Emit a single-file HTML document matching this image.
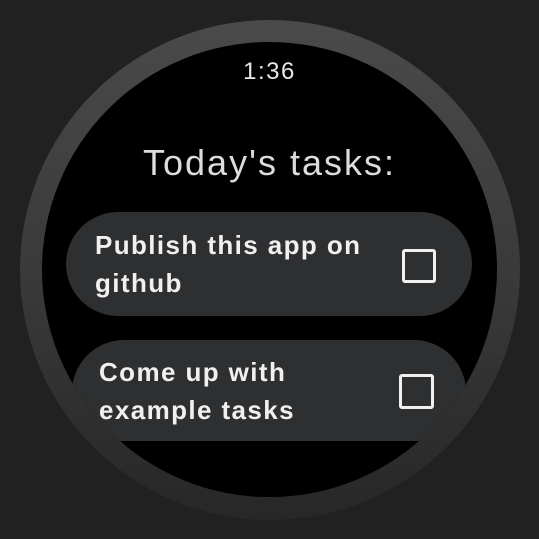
<!DOCTYPE html>
<html><head><style>
html,body{margin:0;padding:0;background:#212121;width:539px;height:539px;overflow:hidden;font-family:"Liberation Sans",Roboto,sans-serif}
.ring{position:absolute;left:20px;top:20px;width:500px;height:500px;border-radius:50%;background:linear-gradient(#4a4a4a,#3a3a3a 50%,#272727)}
.face{position:absolute;left:42px;top:42px;width:455px;height:455px;border-radius:50%;background:#000;overflow:hidden}
.time{position:absolute;left:0;width:455px;top:16px;text-align:center;color:#e8e8e8;font-size:24px;letter-spacing:1.5px}
.title{position:absolute;left:0;width:455px;top:100px;text-align:center;color:#dcdcdc;font-size:36px;letter-spacing:2px}
.card{position:absolute;background:#2e2f31;border-radius:52px;color:#f0f0f0;font-weight:bold;font-size:26px;letter-spacing:1.4px;line-height:38px}
.box{position:absolute;border:3px solid #f0f0f0;border-radius:3px;box-sizing:border-box}
</style></head><body>
<div class="ring"></div>
<div class="face">
<div class="time">1:36</div>
<div class="title">Today's tasks:</div>
<div class="card" style="left:24px;top:170px;width:406px;height:104px">
<div style="position:absolute;left:29px;top:14px">Publish this app on<br>github</div>
<div class="box" style="left:336px;top:37px;width:34px;height:34px"></div></div>
<div class="card" style="left:30px;top:298px;width:394px;height:140px">
<div style="position:absolute;left:27px;top:13px">Come up with<br>example tasks</div>
<div class="box" style="left:327px;top:34px;width:35px;height:35px"></div></div>
<div style="position:absolute;left:0;top:399px;width:455px;height:60px;background:#000"></div>
</div>
</body></html>
